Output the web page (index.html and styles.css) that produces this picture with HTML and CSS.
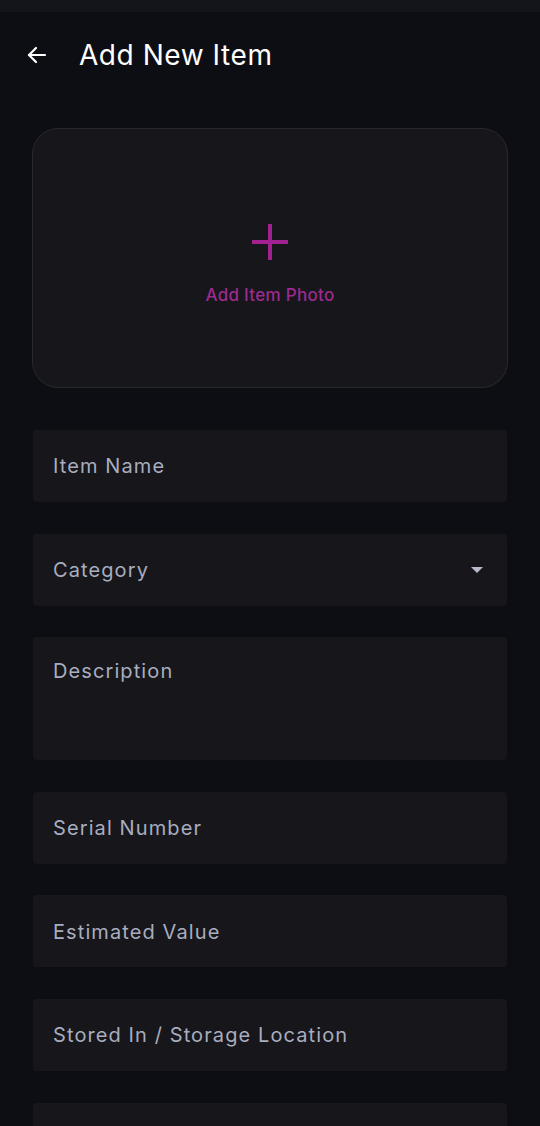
FILE: index.html
```html
<!DOCTYPE html>
<html>
<head>
    <title>Add New Item</title>
    <link rel="stylesheet" href="styles.css">
</head>
<body>
    <div class="status-bar"></div>
    <div class="header">
        <button class="back" aria-label="Back">
            <svg width="24" height="24" viewBox="0 0 24 24" fill="none" stroke="#ffffff" stroke-width="2.2" stroke-linecap="round" stroke-linejoin="round">
                <path d="M20 12H4"/>
                <path d="M11 5l-7 7 7 7"/>
            </svg>
        </button>
        <h1>Add New Item</h1>
    </div>
    <div class="form">
        <div class="photo">
            <svg width="38" height="38" viewBox="0 0 38 38">
                <path d="M19 1v36M1 19h36" stroke="#a0218f" stroke-width="4"/>
            </svg>
            <span>Add Item Photo</span>
        </div>
        <div class="field">Item Name</div>
        <div class="field select">
            <span>Category</span>
            <svg width="14" height="8" viewBox="0 0 14 8"><path d="M1 1h12L7 7z" fill="#b6bacb"/></svg>
        </div>
        <div class="field tall">Description</div>
        <div class="field">Serial Number</div>
        <div class="field">Estimated Value</div>
        <div class="field">Stored In / Storage Location</div>
        <div class="field"></div>
    </div>
</body>
</html>
```

FILE: styles.css
```css
body {
    margin: 0;
    background-color: #0d0e13;
    font-family: Inter, "Noto Sans", sans-serif;
    height: 1126px;
    overflow: hidden;
}
.status-bar {
    height: 12px;
    background-color: #14151a;
}
.header {
    display: flex;
    align-items: center;
    height: 86px;
    padding-left: 24px;
}
.back {
    background: none;
    border: none;
    padding: 0;
    width: 26px;
    height: 26px;
    display: flex;
    align-items: center;
    justify-content: center;
    margin-right: 29px;
}
.header h1 {
    margin: 0;
    color: #ffffff;
    font-size: 28px;
    font-weight: 400;
    letter-spacing: 0.55px;
}
.form {
    padding: 30px 33px 0;
    display: flex;
    flex-direction: column;
    gap: 31.6px;
}
.photo {
    margin: 0 -1px 10.4px;
    height: 260px;
    box-sizing: border-box;
    padding-top: 14px;
    border: 1px solid #28292f;
    border-radius: 26px;
    background-color: #16161b;
    display: flex;
    flex-direction: column;
    align-items: center;
    justify-content: center;
    gap: 24px;
}
.photo svg {
    margin-top: -2px;
}
.photo span {
    color: #9d2a8f;
    font-size: 17px;
    font-weight: 500;
    letter-spacing: 0.3px;
}
.field {
    height: 72px;
    box-sizing: border-box;
    padding: 0 20px 0;
    padding-top: 1px;
    background-color: #16161b;
    border-radius: 4px;
    color: #a8adbf;
    font-size: 20px;
    letter-spacing: 1.1px;
    display: flex;
    align-items: center;
}
.select {
    justify-content: space-between;
    padding-right: 23px;
}
.tall {
    height: 123px;
    align-items: flex-start;
    padding-top: 22px;
}
```
